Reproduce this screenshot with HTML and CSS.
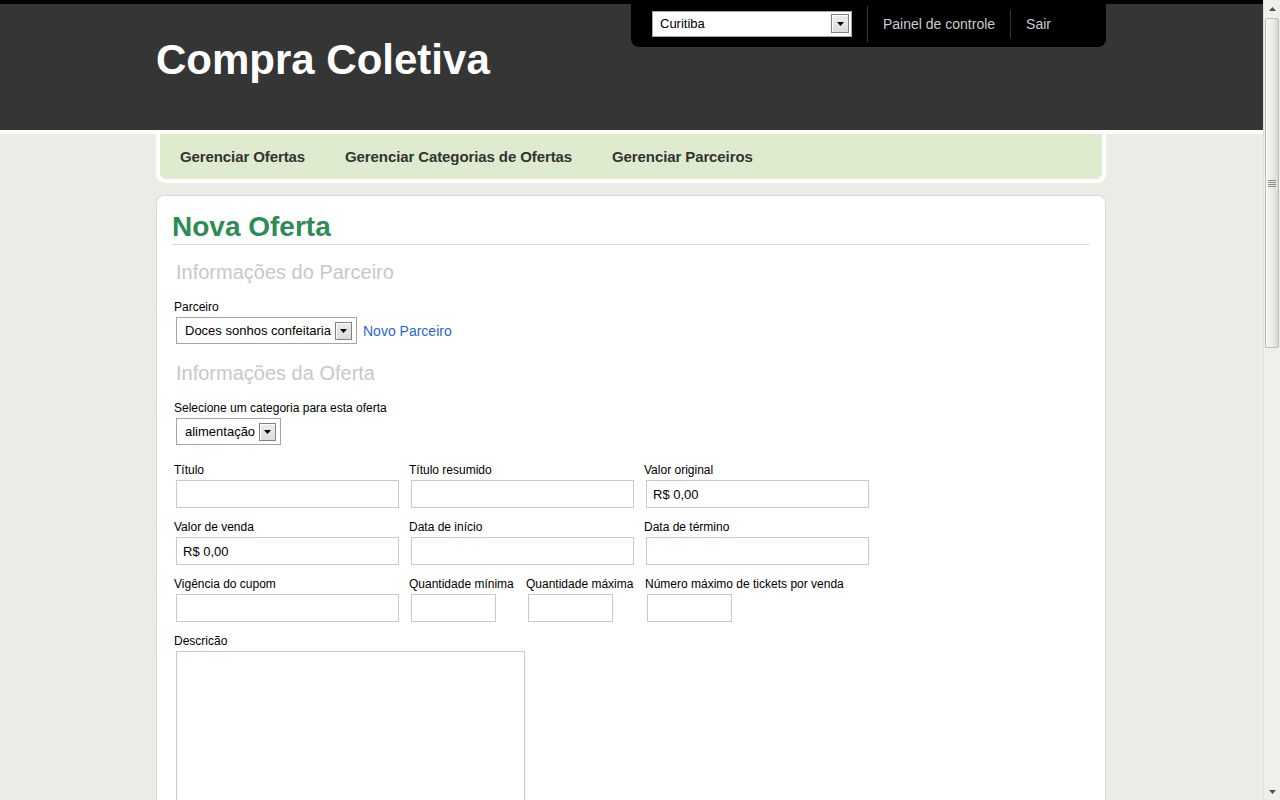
FILE: index.html
```html
<!DOCTYPE html>
<html lang="pt-BR">
<head>
<meta charset="utf-8">
<title>Compra Coletiva - Nova Oferta</title>
<link rel="stylesheet" href="styles.css">
</head>
<body>
<header class="site-header">
  <div class="container header-inner">
    <h1 class="logo">Compra Coletiva</h1>
    <div class="user-bar">
      <div class="select select-city">
        <span class="select-text">Curitiba</span>
        <span class="select-btn select-btn-city"><svg width="7" height="4" viewBox="0 0 7 4"><polygon points="0,0 7,0 3.5,4" fill="#000"/></svg></span>
      </div>
      <span class="sep"></span>
      <a class="user-link" href="#">Painel de controle</a>
      <span class="sep sep-short"></span>
      <a class="user-link" href="#">Sair</a>
    </div>
  </div>
</header>

<nav class="container main-nav">
  <ul class="nav-list">
    <li><a href="#">Gerenciar Ofertas</a></li>
    <li><a href="#">Gerenciar Categorias de Ofertas</a></li>
    <li><a href="#">Gerenciar Parceiros</a></li>
  </ul>
</nav>

<main class="container content">
  <h2 class="page-title">Nova Oferta</h2>

  <h3 class="section-title">Informações do Parceiro</h3>
  <div class="block">
    <label class="field-label">Parceiro</label>
    <div class="control-row">
      <div class="select">
        <span class="select-text">Doces sonhos confeitaria</span>
        <span class="select-btn"><svg width="7" height="4" viewBox="0 0 7 4"><polygon points="0,0 7,0 3.5,4" fill="#000"/></svg></span>
      </div>
      <a class="link" href="#">Novo Parceiro</a>
    </div>
  </div>

  <h3 class="section-title section-title-offer">Informações da Oferta</h3>
  <div class="block block-category">
    <label class="field-label">Selecione um categoria para esta oferta</label>
    <div class="control-row">
      <div class="select">
        <span class="select-text">alimentação</span>
        <span class="select-btn"><svg width="7" height="4" viewBox="0 0 7 4"><polygon points="0,0 7,0 3.5,4" fill="#000"/></svg></span>
      </div>
    </div>
  </div>

  <div class="form-row">
    <div class="field"><label class="field-label">Título</label><input class="input" type="text"></div>
    <div class="field"><label class="field-label">Título resumido</label><input class="input" type="text"></div>
    <div class="field"><label class="field-label">Valor original</label><input class="input" type="text" value="R$ 0,00"></div>
  </div>
  <div class="form-row">
    <div class="field"><label class="field-label">Valor de venda</label><input class="input" type="text" value="R$ 0,00"></div>
    <div class="field"><label class="field-label">Data de início</label><input class="input" type="text"></div>
    <div class="field"><label class="field-label">Data de término</label><input class="input" type="text"></div>
  </div>
  <div class="form-row">
    <div class="field"><label class="field-label">Vigência do cupom</label><input class="input" type="text"></div>
    <div class="field field-qmin"><label class="field-label">Quantidade mínima</label><input class="input input-small" type="text"></div>
    <div class="field field-qmax"><label class="field-label">Quantidade máxima</label><input class="input input-small" type="text"></div>
    <div class="field field-auto"><label class="field-label">Número máximo de tickets por venda</label><input class="input input-small" type="text"></div>
  </div>
  <div class="block">
    <label class="field-label">Descricão</label>
    <textarea class="textarea"></textarea>
  </div>
</main>

<div class="scrollbar">
  <div class="sb-btn"><svg width="7" height="4" viewBox="0 0 7 4"><polygon points="0,4 7,4 3.5,0" fill="#4d4d4d"/></svg></div>
  <div class="sb-thumb"><span class="grip"></span></div>
  <div class="sb-track"></div>
  <div class="sb-btn"><svg width="7" height="4" viewBox="0 0 7 4"><polygon points="0,0 7,0 3.5,4" fill="#4d4d4d"/></svg></div>
</div>
</body>
</html>
```
FILE: styles.css
```css
html {
  overflow: hidden;
}
body {
  margin: 0 17px 0 0;
  background: #ececE6;
  font-family: "Liberation Sans", Arial, sans-serif;
  color: #000;
}
.container {
  width: 950px;
  margin-left: calc((100% - 951px) / 2);
  margin-right: auto;
}

/* Header */
.site-header {
  background: #353535;
  border-top: 4px solid #000;
  border-bottom: 4px solid #fff;
}
.header-inner {
  position: relative;
  height: 126px;
  box-sizing: border-box;
  padding-top: 32px;
}
.logo {
  margin: 0;
  font-size: 42px;
  line-height: 48px;
  font-weight: bold;
  color: #fff;
}
.user-bar {
  position: absolute;
  top: -4px;
  right: 0;
  width: 475px;
  height: 47px;
  box-sizing: border-box;
  padding-left: 21px;
  background: #000;
  border-radius: 0 0 8px 8px;
  display: flex;
  align-items: center;
}
.sep {
  width: 1px;
  height: 36px;
  background: #333;
  margin: 0 15px;
}
.sep-short {
  height: 28px;
}
.user-link {
  font-size: 14px;
  color: #ccc;
  text-decoration: none;
}

/* Selects */
.select {
  display: inline-flex;
  align-items: center;
  height: 27px;
  box-sizing: border-box;
  border: 1px solid #a5a5a5;
  background: #fff;
  padding: 0 4px 0 8px;
  font-size: 13px;
  color: #000;
}
.select-btn {
  margin-left: 4px;
  width: 17px;
  height: 18px;
  box-sizing: border-box;
  border: 1px solid #808080;
  background: linear-gradient(#ececec, #dcdcdc);
  box-shadow: inset 1px 1px 0 #fff;
  display: flex;
  align-items: center;
  justify-content: center;
}
.select-city {
  width: 200px;
  height: 26px;
  padding: 0 2px 0 7px;
}
.select-city .select-text {
  flex: 1;
}
.select-btn-city {
  width: 18px;
  height: 19px;
}

/* Nav */
.main-nav {
  background: #fff;
  padding: 0 4px 4px 4px;
  box-sizing: border-box;
  border-radius: 0 0 9px 9px;
}
.nav-list {
  display: flex;
  margin: 0;
  padding: 0;
  list-style: none;
  height: 45px;
  background: #deebce;
  border-radius: 0 0 6px 6px;
}
.nav-list a {
  display: block;
  padding: 0 20px;
  line-height: 45px;
  font-size: 15px;
  font-weight: bold;
  letter-spacing: -0.1px;
  color: #333;
  text-decoration: none;
}

/* Content */
.content {
  margin-top: 12px;
  background: #fff;
  border: 1px solid #dadada;
  border-bottom: 0;
  border-radius: 8px 8px 0 0;
  padding: 15px 15px 40px;
  box-sizing: border-box;
}
.page-title {
  margin: 0;
  font-size: 28px;
  line-height: 32px;
  font-weight: bold;
  color: #2d8c56;
  padding-bottom: 1px;
  border-bottom: 1px solid #ddd;
}
.section-title {
  margin: 15px 0 15px;
  padding-left: 4px;
  font-size: 20px;
  line-height: 24px;
  font-weight: normal;
  color: #c8c8c8;
}
.section-title-offer {
  margin-top: 17px;
}
.field-label {
  display: block;
  padding-left: 2px;
  font-size: 12px;
  line-height: 16px;
  margin-bottom: 2px;
}
.control-row {
  display: flex;
  align-items: center;
  padding-left: 4px;
}
.link {
  margin-left: 6px;
  font-size: 14px;
  color: #1f66d6;
  text-decoration: none;
}
.block-category {
  margin-bottom: 17px;
}
.form-row {
  display: flex;
  margin-bottom: 11px;
}
.field {
  width: 235px;
  flex: none;
}
.field-qmin {
  width: 117px;
}
.field-qmax {
  width: 119px;
}
.field-auto {
  width: auto;
}
.input {
  display: block;
  margin: 0 0 0 4px;
  width: 223px;
  height: 28px;
  box-sizing: border-box;
  border: 1px solid #c9c9c9;
  padding: 0 6px;
  font-family: "Liberation Sans", Arial, sans-serif;
  font-size: 13px;
  color: #000;
  background: #fff;
}
.input-small {
  width: 85px;
}
.textarea {
  display: block;
  margin: 0 0 0 4px;
  width: 349px;
  height: 220px;
  box-sizing: border-box;
  border: 1px solid #c9c9c9;
  resize: none;
  background: #fff;
}

/* Fake browser scrollbar */
.scrollbar {
  position: fixed;
  top: 0;
  right: 0;
  width: 17px;
  height: 100%;
  box-sizing: border-box;
  background: #efefec;
  border-left: 1px solid #e0e0da;
  display: flex;
  flex-direction: column;
}
.sb-btn {
  height: 17px;
  flex: none;
  display: flex;
  align-items: center;
  justify-content: center;
}
.sb-thumb {
  height: 330px;
  flex: none;
  margin: 1px 0 0 1px;
  width: 14px;
  box-sizing: border-box;
  border: 1px solid #bdbdb8;
  border-radius: 2px;
  background: linear-gradient(to right, #f7f7f5, #ebebe8 55%, #d6d6d1);
  display: flex;
  align-items: center;
  justify-content: center;
}
.grip {
  width: 8px;
  height: 7px;
  background: repeating-linear-gradient(to bottom, #8a8a8a 0 1px, transparent 1px 2px);
}
.sb-track {
  flex: 1;
}
```
